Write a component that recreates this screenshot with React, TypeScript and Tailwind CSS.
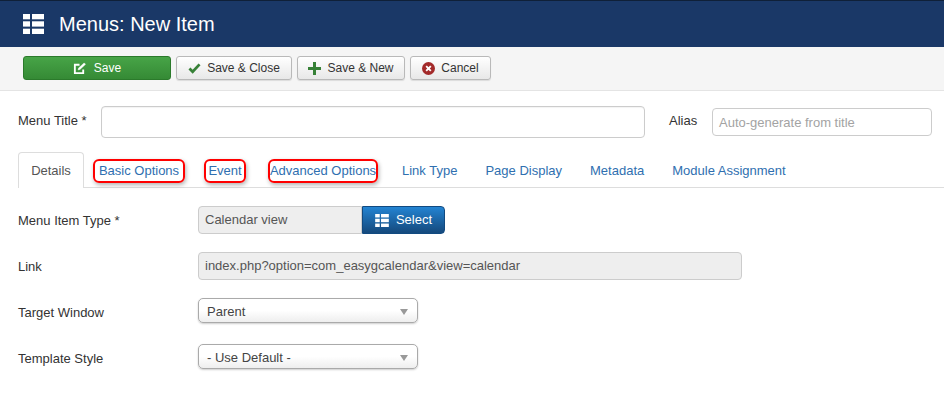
const ListIcon = ({ className }: { className: string }) => (
  <svg viewBox="0 0 21 20" className={className} fill="currentColor">
    <rect x="0" y="0" width="7" height="5.300" />
    <rect x="9" y="0" width="12" height="5.300" />
    <rect x="0" y="7.300" width="7" height="5.300" />
    <rect x="9" y="7.300" width="12" height="5.300" />
    <rect x="0" y="14.700" width="7" height="5.300" />
    <rect x="9" y="14.700" width="12" height="5.300" />
  </svg>
);

const toolbarBtn =
  "flex h-6 items-center justify-center gap-[6px] rounded-[3px] border border-[#b9b9b9] bg-gradient-to-b from-white to-[#e8e8e8] text-[12px] text-[#333] shadow-[0_1px_1px_rgba(0,0,0,0.1)]";

const tabs = [
  { label: "Basic Options", ml: "ml-[9px]", w: "w-[92px]" },
  { label: "Event", ml: "ml-[19px]", w: "w-[42px]" },
  { label: "Advanced Options", ml: "ml-[22px]", w: "w-[110px]" },
];

const plainTabs = [
  { label: "Link Type", ml: "ml-[24px]" },
  { label: "Page Display", ml: "ml-[28px]" },
  { label: "Metadata", ml: "ml-[28px]" },
  { label: "Module Assignment", ml: "ml-[28px]" },
];

const SelectBox = ({ value }: { value: string }) => (
  <div className="flex h-[25px] w-[220px] items-center justify-between rounded-[5px] border border-[#aaa] bg-gradient-to-b from-white from-50% to-[#eee] pt-[2px] pr-[9px] pl-[8px] text-[13px] text-[#444] shadow-[0_1px_2px_rgba(0,0,0,0.2)]">
    <span>{value}</span>
    <span className="h-0 w-0 border-x-[4px] border-t-[6px] border-x-transparent border-t-[#999]" />
  </div>
);

export default function App() {
  return (
    <div className="h-[406px] w-[944px] overflow-hidden bg-white font-['Liberation_Sans',Arial,sans-serif] text-[13px] text-[#333]">
      <header className="flex h-[47px] items-center border-t border-[#0f2038] bg-[#1a3867] pl-[23px] text-white">
        <ListIcon className="h-[20px] w-[21px]" />
        <h1 className="ml-[15px] text-[20px] leading-none">Menus: New Item</h1>
      </header>

      <div className="flex h-[44px] items-start gap-[5px] border-b border-[#e4e4e4] bg-[#f5f5f5] pt-[9px] pl-[23px]">
        <button className="flex h-6 w-[148px] items-center justify-center gap-[8px] rounded-[3px] border border-[#2b7a2b] bg-gradient-to-b from-[#47a447] to-[#358a35] text-[12px] text-white">
          <svg viewBox="0 0 14 14" className="h-[13px] w-[13px]" fill="none" stroke="currentColor" strokeWidth="2">
            <path d="M11 8v4H2V3h5" />
            <path d="M5.500 8.500l.5-2 6-5.500 1.500 1.500L7.500 8z" fill="currentColor" strokeWidth="0.5" />
          </svg>
          Save
        </button>
        <button className={`${toolbarBtn} w-[116px]`}>
          <svg viewBox="0 0 14 12" className="h-[11px] w-[13px] text-[#378137]" fill="none" stroke="currentColor" strokeWidth="3">
            <path d="M1.500 6l3.500 3.500 7.500-8" />
          </svg>
          Save &amp; Close
        </button>
        <button className={`${toolbarBtn} w-[108px]`}>
          <svg viewBox="0 0 13 13" className="h-[13px] w-[13px] text-[#378137]" fill="currentColor">
            <path d="M5 0h3v5h5v3H8v5H5V8H0V5h5z" />
          </svg>
          Save &amp; New
        </button>
        <button className={`${toolbarBtn} w-[81px]`}>
          <svg viewBox="0 0 14 14" className="h-[13px] w-[13px]">
            <circle cx="7" cy="7" r="7" fill="#a32a2a" />
            <path d="M4.500 4.500l5 5m0-5l-5 5" stroke="white" strokeWidth="2" />
          </svg>
          Cancel
        </button>
      </div>

      <div className="flex items-start pt-[15px] pl-[18px]">
        <label className="mt-[7px] w-[83px] leading-[15px]">Menu Title *</label>
        <div className="h-[32px] w-[544px] rounded-[4px] border border-[#ccc] bg-white shadow-[inset_0_1px_1px_rgba(0,0,0,0.05)]" />
        <label className="mt-[7px] ml-[24px] w-[43px] leading-[15px]">Alias</label>
        <div className="mt-[2px] flex h-[28px] w-[220px] items-center rounded-[4px] border border-[#ccc] pt-px pl-[6px] text-[#a3a3a3]">
          Auto-generate from title
        </div>
      </div>

      <nav className="mt-[14px] ml-[18px] flex h-[36px] w-[926px] items-center border-b border-[#ddd] text-[#2f6fb0]">
        <div className="flex h-[36px] w-[66px] items-center justify-center self-start rounded-t-[4px] border-x border-t border-[#ddd] bg-white text-[#555]">
          Details
        </div>
        {tabs.map((tab) => (
          <div key={tab.label} className={`relative flex h-[35px] items-center justify-center pt-[2px] ${tab.ml} ${tab.w}`}>
            {tab.label}
            <span className="absolute inset-x-0 top-[7px] h-[24px] rounded-[6px] border-2 border-[#f00] shadow-[1px_2px_4px_rgba(0,0,0,0.3)]" />
          </div>
        ))}
        {plainTabs.map((tab) => (
          <div key={tab.label} className={`pt-[2px] ${tab.ml}`}>
            {tab.label}
          </div>
        ))}
      </nav>

      <div className="mt-[18px] ml-[18px] flex flex-col">
        <div className="flex h-[28px] items-center">
          <label className="w-[180px] pt-[2px]">Menu Item Type *</label>
          <div className="flex h-[28px] w-[164px] items-center rounded-l-[4px] border border-[#ccc] bg-[#eee] pl-[6px] text-[#555]">
            Calendar view
          </div>
          <button className="flex h-[28px] w-[83px] items-center justify-center gap-[7px] rounded-r-[4px] border border-[#124a80] bg-gradient-to-b from-[#2384d3] to-[#15497c] text-white">
            <ListIcon className="h-[13px] w-[14px]" />
            Select
          </button>
        </div>
        <div className="mt-[18px] flex h-[28px] items-center">
          <label className="w-[180px] pt-[2px]">Link</label>
          <div className="flex h-[28px] w-[544px] items-center rounded-[4px] border border-[#ccc] bg-[#eee] pl-[6px] text-[#555]">
            index.php?option=com_easygcalendar&amp;view=calendar
          </div>
        </div>
        <div className="mt-[18px] flex h-[25px] items-center">
          <label className="w-[180px] pt-[4px]">Target Window</label>
          <SelectBox value="Parent" />
        </div>
        <div className="mt-[21px] flex h-[25px] items-center">
          <label className="w-[180px] pt-[4px]">Template Style</label>
          <SelectBox value="- Use Default -" />
        </div>
      </div>
    </div>
  );
}
